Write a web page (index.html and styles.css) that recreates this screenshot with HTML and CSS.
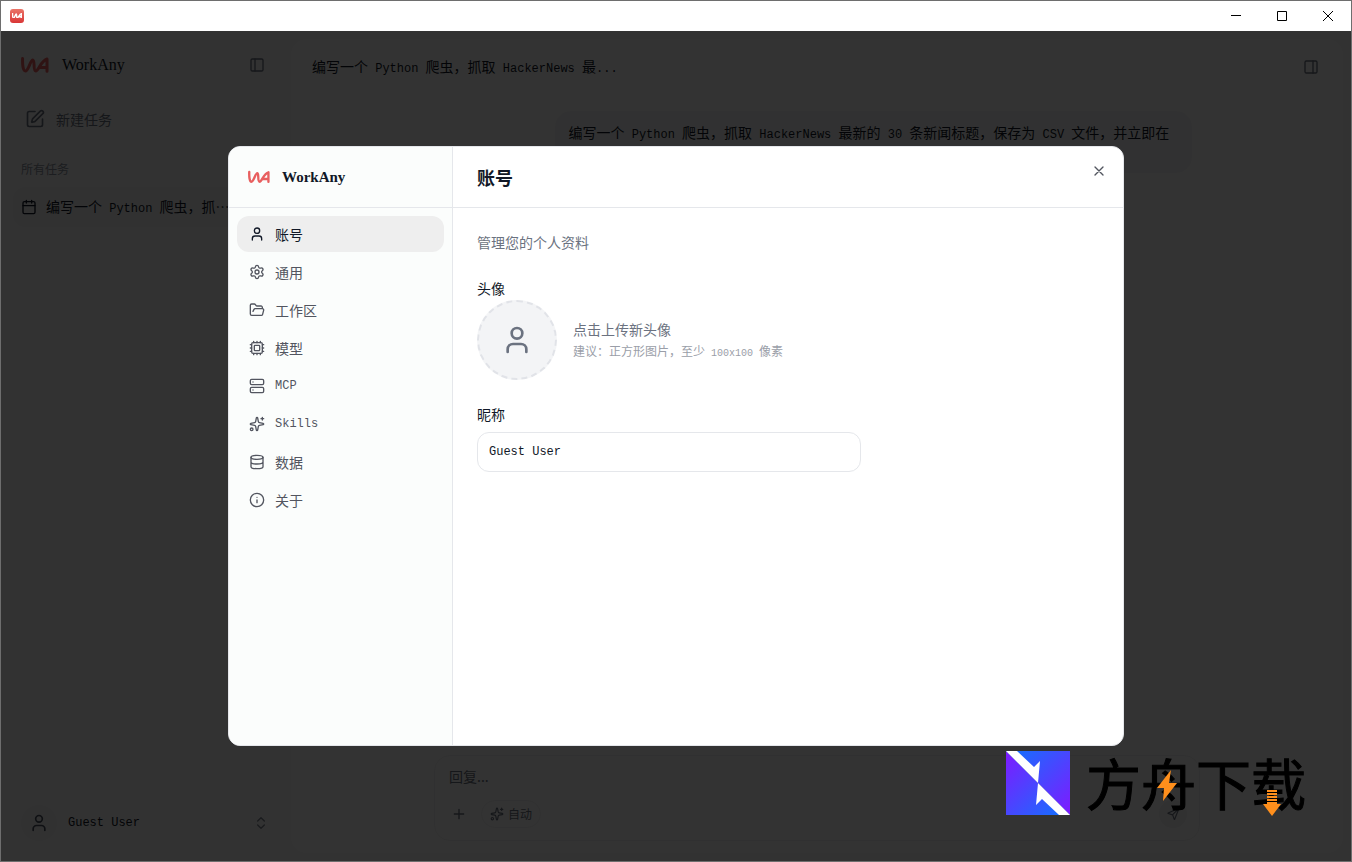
FILE: index.html
```html
<!DOCTYPE html>
<html lang="zh-CN">
<head>
    <meta charset="UTF-8">
    <meta name="viewport" content="width=device-width, initial-scale=1.0">
    <title>WorkAny</title>
    <link rel="stylesheet" href="styles.css">
</head>
<body>

<svg class="symbols" aria-hidden="true">
    <symbol id="logo" viewBox="0 0 28 16">
        <path d="M1.6 1.6C1.4 7 1.8 14 4.4 14C7.4 14 9.4 3 11.8 3C14.2 3 11.8 14 14.8 14C17.6 14 20 3.500 26 2V14.200M19 10.500H26"/>
    </symbol>
    <symbol id="user" viewBox="0 0 24 24">
        <path d="M19 21v-2a4 4 0 0 0-4-4H9a4 4 0 0 0-4 4v2"/><circle cx="12" cy="7" r="4"/>
    </symbol>
    <symbol id="sparkles" viewBox="0 0 24 24">
        <path d="M11.017 2.814a1 1 0 0 1 1.966 0l1.051 5.558a2 2 0 0 0 1.594 1.594l5.558 1.051a1 1 0 0 1 0 1.966l-5.558 1.051a2 2 0 0 0-1.594 1.594l-1.051 5.558a1 1 0 0 1-1.966 0l-1.051-5.558a2 2 0 0 0-1.594-1.594l-5.558-1.051a1 1 0 0 1 0-1.966l5.558-1.051a2 2 0 0 0 1.594-1.594z"/>
        <path d="M20 2v4M22 4h-4"/><circle cx="4" cy="20" r="2"/>
    </symbol>
</svg>

<div class="window">
    <header class="titlebar">
        <span class="app-icon"><svg viewBox="0 0 28 16"><use href="#logo"/></svg></span>
        <div class="window-controls">
            <button type="button" aria-label="最小化"><svg viewBox="0 0 10 10"><path d="M0 4.500h10"/></svg></button>
            <button type="button" aria-label="最大化"><svg viewBox="0 0 10 10"><path d="M.5 .5h9v9h-9z"/></svg></button>
            <button type="button" aria-label="关闭窗口"><svg viewBox="0 0 10 10"><path d="M0 0l10 10M10 0L0 10"/></svg></button>
        </div>
    </header>

    <div class="app">
        <aside class="sidebar">
            <div class="brand">
                <svg class="logo"><use href="#logo"/></svg>
                <span class="brand-name">WorkAny</span>
                <button type="button" class="icon-btn" aria-label="收起侧栏">
                    <svg class="icon" viewBox="0 0 24 24"><rect x="3" y="3" width="18" height="18" rx="2"/><path d="M9 3v18"/></svg>
                </button>
            </div>

            <button type="button" class="new-task">
                <svg class="icon icon-20" viewBox="0 0 24 24"><path d="M12 3H5a2 2 0 0 0-2 2v14a2 2 0 0 0 2 2h14a2 2 0 0 0 2-2v-7"/><path d="M18.375 2.625a1 1 0 0 1 3 3l-9.013 9.014a2 2 0 0 1-.853.505l-2.873.84a.5.5 0 0 1-.62-.62l.84-2.873a2 2 0 0 1 .506-.852z"/></svg>
                新建任务
            </button>

            <p class="section-title">所有任务</p>
            <a href="#" class="task">
                <svg class="icon" viewBox="0 0 24 24"><path d="M8 2v4M16 2v4M3 10h18"/><rect x="3" y="4" width="18" height="18" rx="2"/></svg>
                <span class="task-name">编写一个<span class="latin"> Python </span>爬虫，抓⋯</span>
            </a>

            <button type="button" class="account">
                <span class="account-avatar"><svg class="icon icon-20"><use href="#user"/></svg></span>
                <span class="latin">Guest User</span>
                <svg class="icon chevrons" viewBox="0 0 24 24"><path d="m7 15 5 5 5-5M7 9l5-5 5 5"/></svg>
            </button>
        </aside>

        <main class="chat">
            <div class="chat-header">
                <h1>编写一个<span class="latin"> Python </span>爬虫，抓取<span class="latin"> HackerNews </span>最<span class="latin">...</span></h1>
                <button type="button" class="icon-btn" aria-label="展开面板">
                    <svg class="icon" viewBox="0 0 24 24"><rect x="3" y="3" width="18" height="18" rx="2"/><path d="M15 3v18"/></svg>
                </button>
            </div>

            <div class="messages">
                <p class="bubble">编写一个<span class="latin"> Python </span>爬虫，抓取<span class="latin"> HackerNews </span>最新的<span class="latin"> 30 </span>条新闻标题，保存为<span class="latin"> CSV </span>文件，并立即在</p>
            </div>

            <form class="composer">
                <input type="text" placeholder="回复..." aria-label="回复">
                <div class="composer-actions">
                    <button type="button" class="icon-btn" aria-label="添加附件">
                        <svg class="icon" viewBox="0 0 24 24"><path d="M5 12h14M12 5v14"/></svg>
                    </button>
                    <button type="button" class="mode"><svg class="icon icon-14"><use href="#sparkles"/></svg>自动</button>
                    <button type="submit" class="send" aria-label="发送">
                        <svg class="icon icon-14" viewBox="0 0 24 24"><path d="M3.714 10.200l17.500-7.500a.5.5 0 0 1 .65.65l-7 17.500a.5.5 0 0 1-.94-.03l-2.500-7.400-7.700-2.300a.5.5 0 0 1-.01-.92zM11.500 13L21.500 3"/></svg>
                    </button>
                </div>
            </form>
        </main>

        <div class="overlay">
            <section class="dialog" role="dialog" aria-labelledby="dialogTitle">
                <div class="dialog-sidebar">
                    <div class="dialog-brand">
                        <svg class="logo"><use href="#logo"/></svg>
                        <span class="brand-name">WorkAny</span>
                    </div>
                    <nav class="dialog-nav">
                        <a href="#" class="active"><svg class="icon"><use href="#user"/></svg>账号</a>
                        <a href="#"><svg class="icon" viewBox="0 0 24 24"><path d="M9.671 4.136a2.34 2.34 0 0 1 4.659 0 2.34 2.34 0 0 0 3.319 1.915 2.34 2.34 0 0 1 2.33 4.033 2.34 2.34 0 0 0 0 3.831 2.34 2.34 0 0 1-2.33 4.033 2.34 2.34 0 0 0-3.319 1.915 2.34 2.34 0 0 1-4.659 0 2.34 2.34 0 0 0-3.32-1.915 2.34 2.34 0 0 1-2.33-4.033 2.34 2.34 0 0 0 0-3.831A2.34 2.34 0 0 1 6.35 6.051a2.34 2.34 0 0 0 3.319-1.915"/><circle cx="12" cy="12" r="3"/></svg>通用</a>
                        <a href="#"><svg class="icon" viewBox="0 0 24 24"><path d="m6 14 1.5-2.9A2 2 0 0 1 9.240 10H20a2 2 0 0 1 1.940 2.5l-1.540 6a2 2 0 0 1-1.950 1.5H4a2 2 0 0 1-2-2V5a2 2 0 0 1 2-2h3.900a2 2 0 0 1 1.690.9l.81 1.2a2 2 0 0 0 1.670.9H18a2 2 0 0 1 2 2v2"/></svg>工作区</a>
                        <a href="#"><svg class="icon" viewBox="0 0 24 24"><rect x="4" y="4" width="16" height="16" rx="2"/><rect x="8" y="8" width="8" height="8" rx="1"/><path d="M12 20v2M12 2v2M17 20v2M17 2v2M2 12h2M2 17h2M2 7h2M20 12h2M20 17h2M20 7h2M7 20v2M7 2v2"/></svg>模型</a>
                        <a href="#"><svg class="icon" viewBox="0 0 24 24"><rect x="2" y="2" width="20" height="8" rx="2"/><rect x="2" y="14" width="20" height="8" rx="2"/><path d="M6 6h.01M6 18h.01"/></svg><span class="latin">MCP</span></a>
                        <a href="#"><svg class="icon"><use href="#sparkles"/></svg><span class="latin">Skills</span></a>
                        <a href="#"><svg class="icon" viewBox="0 0 24 24"><ellipse cx="12" cy="5" rx="9" ry="3"/><path d="M3 5v14a9 3 0 0 0 18 0V5M3 12a9 3 0 0 0 18 0"/></svg>数据</a>
                        <a href="#"><svg class="icon" viewBox="0 0 24 24"><circle cx="12" cy="12" r="10"/><path d="M12 16v-4M12 8h.01"/></svg>关于</a>
                    </nav>
                </div>

                <div class="dialog-main">
                    <div class="dialog-header">
                        <h2 id="dialogTitle">账号</h2>
                        <button type="button" class="close-btn" aria-label="关闭">
                            <svg class="icon" viewBox="0 0 24 24"><path d="M18 6 6 18M6 6l12 12"/></svg>
                        </button>
                    </div>
                    <form class="profile">
                        <p class="hint">管理您的个人资料</p>
                        <div class="avatar-field">
                            <span class="field-label">头像</span>
                            <div class="avatar-row">
                                <button type="button" class="avatar" aria-label="上传头像"><svg class="icon icon-32"><use href="#user"/></svg></button>
                                <div class="avatar-text">
                                    <p class="hint">点击上传新头像</p>
                                    <p class="note">建议：正方形图片，至少<span class="latin-sm"> 100x100 </span>像素</p>
                                </div>
                            </div>
                        </div>
                        <div class="name-field">
                            <label for="nickname">昵称</label>
                            <input type="text" id="nickname" value="Guest User">
                        </div>
                    </form>
                </div>
            </section>
        </div>
    </div>
</div>

<div class="download-badge">
    <svg class="badge-mark" viewBox="0 0 64 64">
        <defs>
            <linearGradient id="markLeft" x1="0" y1="0.1" x2="0.9" y2="1"><stop offset="0" stop-color="#7b1dff"/><stop offset="1" stop-color="#1470ff"/></linearGradient>
            <linearGradient id="markRight" x1="0.1" y1="0" x2="1" y2="0.9"><stop offset="0" stop-color="#1470ff"/><stop offset="1" stop-color="#7b1dff"/></linearGradient>
        </defs>
        <path fill="url(#markLeft)" d="M0 0v64h64z"/>
        <path fill="url(#markRight)" d="M0 0h64v64z"/>
        <path fill="#fff" d="M0 0h11l17 16 6-6-2 22zM64 64H53L36 48l-6 6 2-22z"/>
    </svg>
    <span class="badge-text">方舟下载
        <svg class="bolt" viewBox="0 0 20 32"><path d="M14 0L0 18h7L6 31 20 13h-8z"/></svg>
        <svg class="arrow" viewBox="0 0 18 26"><path d="M4 0h10v2H4zM4 3h10v2H4zM4 6h10v2H4zM4 9h10v2H4zM4 12h10v2h4L9 26 0 14h4z"/></svg>
    </span>
</div>

</body>
</html>
```

FILE: styles.css
```css
* {
    box-sizing: border-box;
}

body {
    margin: 0;
    font-family: "Noto Sans CJK SC", sans-serif;
    font-size: 14px;
    line-height: 20px;
    color: #111827;
}

h1, h2, p {
    margin: 0;
}

a {
    color: inherit;
    text-decoration: none;
}

button, input {
    font: inherit;
    color: inherit;
}

button {
    display: flex;
    align-items: center;
    padding: 0;
    border: none;
    background: none;
    cursor: pointer;
}

.symbols {
    position: absolute;
    width: 0;
    height: 0;
}

.latin {
    font-family: "Liberation Mono", monospace;
    font-size: 12px;
    white-space: pre;
}

.latin-sm {
    font-family: "Liberation Mono", monospace;
    font-size: 10px;
    white-space: pre;
}

.icon {
    width: 16px;
    height: 16px;
    flex-shrink: 0;
    fill: none;
    stroke: currentColor;
    stroke-width: 2;
    stroke-linecap: round;
    stroke-linejoin: round;
}

.icon-14 {
    width: 14px;
    height: 14px;
}

.icon-20 {
    width: 20px;
    height: 20px;
}

.icon-32 {
    width: 32px;
    height: 32px;
}

.logo {
    width: 28px;
    height: 16px;
    fill: none;
    stroke: #e85f5f;
    stroke-width: 3;
    stroke-linecap: round;
    stroke-linejoin: round;
}

.brand-name {
    font-family: "Liberation Serif", serif;
    font-size: 16px;
}

/* window frame */
.window {
    display: flex;
    flex-direction: column;
    height: 100vh;
    border: 1px solid #6e6e6e;
}

.titlebar {
    display: flex;
    align-items: center;
    justify-content: space-between;
    height: 30px;
    padding-left: 9px;
    padding-bottom: 1px;
    background: #fff;
}

.app-icon {
    display: flex;
    align-items: center;
    width: 14px;
    height: 14px;
    padding: 2px;
    border-radius: 3px;
    background: linear-gradient(#ea7468, #d93636);
}

.app-icon svg {
    width: 10px;
    fill: none;
    stroke: #fff;
    stroke-width: 4;
    stroke-linecap: round;
}

.window-controls {
    display: flex;
    height: 28px;
}

.window-controls button {
    width: 46px;
    justify-content: center;
}

.window-controls svg {
    width: 10px;
    height: 10px;
    fill: none;
    stroke: #000;
}

.app {
    position: relative;
    display: flex;
    flex: 1;
    min-height: 0;
    background: #fafafa;
}

/* sidebar */
.sidebar {
    display: flex;
    flex-direction: column;
    width: 290px;
    padding: 16px 12px;
}

.brand {
    display: flex;
    align-items: center;
    gap: 13px;
    height: 36px;
    padding: 0 14px 0 8px;
}

.brand .icon-btn {
    margin-left: auto;
}

.icon-btn {
    color: #6b7280;
}

.new-task {
    gap: 11px;
    height: 40px;
    margin-top: 16px;
    padding: 0 12px;
    color: #6b7280;
}

.section-title {
    margin-top: 20px;
    padding-left: 8px;
    font-size: 12px;
    color: #8b929e;
}

.task {
    display: flex;
    align-items: center;
    gap: 9px;
    height: 40px;
    margin-top: 8px;
    padding: 0 8px;
    border-radius: 12px;
    background: #f4f4f5;
}

.task-name {
    white-space: nowrap;
}

.account {
    gap: 11px;
    margin-top: auto;
    margin-bottom: 4px;
    padding: 0 10px 0 8px;
}

.account-avatar {
    display: flex;
    align-items: center;
    justify-content: center;
    width: 36px;
    height: 36px;
    border-radius: 50%;
    background: #f4f4f5;
    color: #4b5260;
}

.chevrons {
    margin-left: auto;
    color: #7f8590;
}

/* conversation */
.chat {
    display: flex;
    flex-direction: column;
    flex: 1;
    min-width: 0;
    margin: 8px 8px 8px 0;
    border-radius: 16px;
    background: #fff;
}

.chat-header {
    display: flex;
    align-items: center;
    justify-content: space-between;
    height: 56px;
    padding: 0 24px 0 21px;
}

.chat-header h1 {
    font-size: 14px;
    font-weight: 400;
}

.messages {
    flex: 1;
    width: 100%;
    max-width: 766px;
    margin: 0 auto;
    padding: 16px 8px;
}

.bubble {
    width: fit-content;
    max-width: 85%;
    min-height: 62px;
    margin-left: auto;
    padding: 11px 24px 11px 14px;
    border-radius: 16px;
    background: #f6f6f7;
    white-space: nowrap;
}

.composer {
    width: 100%;
    max-width: 766px;
    margin: 0 auto 12px;
    padding: 10px 12px 12px;
    border: 1px solid #f1f1f3;
    border-radius: 16px;
}

.composer input {
    display: block;
    width: 100%;
    padding: 0 2px;
    border: none;
    outline: none;
    background: none;
}

.composer input::placeholder {
    color: #6b7280;
    opacity: 1;
}

.composer-actions {
    display: flex;
    align-items: center;
    gap: 14px;
    margin-top: 14px;
    padding-left: 4px;
}

.mode {
    gap: 4px;
    height: 28px;
    padding: 0 8px;
    border: 1px solid #f1f1f3;
    border-radius: 14px;
    font-size: 12px;
    color: #6b7280;
}

.send {
    justify-content: center;
    width: 28px;
    height: 28px;
    margin-left: auto;
    border-radius: 50%;
    background: #f4f4f5;
    color: #6b7280;
}

/* settings dialog */
.overlay {
    position: absolute;
    inset: 0;
    display: flex;
    align-items: center;
    justify-content: center;
    background: rgba(0, 0, 0, 0.8);
}

.dialog {
    display: flex;
    width: 90%;
    max-width: 896px;
    height: 600px;
    max-height: 90%;
    overflow: hidden;
    border: 1px solid #e5e7eb;
    border-radius: 12px;
    background: #fff;
}

.dialog-sidebar {
    width: 224px;
    border-right: 1px solid #e5e7eb;
    background: #fbfdfc;
}

.dialog-brand {
    display: flex;
    align-items: center;
    gap: 12px;
    height: 61px;
    padding-left: 19px;
    border-bottom: 1px solid #e5e7eb;
}

.dialog-brand .logo {
    width: 22px;
    height: 14px;
}

.dialog-brand .brand-name {
    font-size: 15px;
    font-weight: 700;
}

.dialog-nav {
    display: flex;
    flex-direction: column;
    gap: 2px;
    padding: 8px;
}

.dialog-nav a {
    display: flex;
    align-items: center;
    gap: 10px;
    height: 36px;
    padding: 0 12px;
    border-radius: 12px;
    color: #52555f;
}

.dialog-nav a.active {
    background: #eeeeee;
    color: #111827;
}

.dialog-main {
    flex: 1;
    min-width: 0;
}

.dialog-header {
    display: flex;
    justify-content: space-between;
    align-items: center;
    height: 61px;
    padding: 0 16px 0 24px;
    border-bottom: 1px solid #e5e7eb;
}

.dialog-header h2 {
    font-size: 18px;
    line-height: 28px;
}

.close-btn {
    align-self: flex-start;
    margin-top: 16px;
    color: #52555f;
}

.profile {
    display: flex;
    flex-direction: column;
    gap: 24px;
    padding: 24px;
}

.hint {
    color: #6b7280;
}

.field-label {
    display: block;
    line-height: 24px;
}

.avatar-row {
    display: flex;
    align-items: center;
    gap: 16px;
}

.avatar {
    justify-content: center;
    width: 80px;
    height: 80px;
    border: 2px dashed #e1e3e8;
    border-radius: 50%;
    background: #f3f4f6;
    color: #6b7280;
}

.note {
    margin-top: 4px;
    font-size: 12px;
    line-height: 16px;
    color: #9a9ea8;
}

.name-field label {
    display: block;
    margin-bottom: 8px;
}

.name-field input {
    display: block;
    width: 100%;
    max-width: 384px;
    height: 40px;
    padding: 0 11px;
    border: 1px solid #e5e7eb;
    border-radius: 12px;
    background: #fff;
    font-family: "Liberation Mono", monospace;
    font-size: 12px;
}

/* floating download badge */
.download-badge {
    position: absolute;
    right: 46px;
    bottom: 47px;
    display: flex;
    align-items: center;
    gap: 16px;
    pointer-events: none;
}

.badge-mark {
    width: 64px;
    height: 64px;
}

.badge-text {
    position: relative;
    font-size: 55px;
    line-height: 60px;
    padding-bottom: 4px;
    color: #000;
    -webkit-text-stroke: 1px #000;
    white-space: nowrap;
}

.badge-text svg {
    position: absolute;
    fill: #ff8f1c;
}

.bolt {
    left: 71px;
    top: 19px;
    width: 20px;
    height: 32px;
}

.arrow {
    right: 25px;
    top: 39px;
    width: 18px;
    height: 26px;
}
```
